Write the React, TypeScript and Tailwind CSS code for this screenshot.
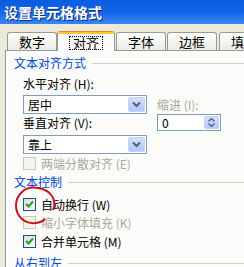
import React from "react";

const font = { fontFamily: '"Noto Sans CJK SC", "Noto Sans", sans-serif' };

function DropBtn() {
  return (
    <div className="w-[17px] h-full rounded-[2px] border border-[#c3d3fd] bg-gradient-to-b from-[#d4e0fc] to-[#b3c7f6] flex items-center justify-center">
      <svg width="9" height="7" viewBox="0 0 9 7">
        <path d="M1 1.5 L4.5 5 L8 1.5" fill="none" stroke="#4d6185" strokeWidth="2" />
      </svg>
    </div>
  );
}

function Select({ value }: { value: string }) {
  return (
    <div className="w-[124px] h-[19px] border border-[#7f9db9] bg-white flex items-center p-[1px]">
      <span className="flex-1 pl-[3px] text-[12px] leading-[14px] text-black">{value}</span>
      <DropBtn />
    </div>
  );
}

function Check({ checked, disabled, label }: { checked?: boolean; disabled?: boolean; label: string }) {
  return (
    <div className="flex items-center h-[13px]">
      <div
        className={
          "w-[13px] h-[13px] border flex items-center justify-center " +
          (disabled
            ? "border-[#cac8bb] bg-[#f5f4ea]"
            : "border-[#1c5180] bg-gradient-to-br from-[#dcdcd7] to-white")
        }
      >
        {checked && (
          <svg width="9" height="9" viewBox="0 0 9 9">
            <path d="M1 4 L3.5 6.5 L8 1.5" fill="none" stroke="#21a121" strokeWidth="2" />
          </svg>
        )}
      </div>
      <span className={"ml-[5px] text-[12px] leading-[14px] " + (disabled ? "text-[#aca899]" : "text-black")}>
        {label}
      </span>
    </div>
  );
}

function Heading({ text }: { text: string }) {
  return (
    <div className="flex items-center h-[14px] pl-[8px]">
      <span className="text-[12px] leading-[14px] text-[#0046d5]">{text}</span>
      <div className="flex-1 ml-[6px] h-[1px] bg-[#d0d0bf]" />
    </div>
  );
}

function Tab({ label }: { label: string }) {
  return (
    <div className="w-[50px] h-[18px] border border-b-0 border-[#919b9c] rounded-t-[3px] bg-gradient-to-b from-white to-[#ecebe5] flex items-center justify-center text-[13px] leading-[14px] text-black shrink-0">
      {label}
    </div>
  );
}

export default function App() {
  return (
    <div className="w-[244px] h-[267px] overflow-hidden bg-[#ece9d8] relative" style={font}>
      <div className="h-[24px] bg-gradient-to-b from-[#0a5ce0] via-[#1464e6] to-[#3a86f2] flex items-center pl-[4px]">
        <span className="text-white font-bold text-[14px] leading-[16px] [text-shadow:1px_1px_0_#0a2a80]">
          设置单元格格式
        </span>
      </div>
      <div className="flex items-end h-[26px] pl-[7px]">
        <Tab label="数字" />
        <div className="relative z-10 -mb-[1px] w-[58px] h-[20px] border-x border-[#919b9c] rounded-t-[3px] bg-[#fcfcfe] flex flex-col shrink-0 overflow-hidden">
          <div className="h-[1px] bg-[#e68b2c]" />
          <div className="h-[2px] bg-[#ffc83c]" />
          <div className="flex-1 flex items-center justify-center">
            <span className="border border-dotted border-black px-[3px] text-[13px] leading-[12px] text-black">对齐</span>
          </div>
        </div>
        <div className="ml-[1px]"><Tab label="字体" /></div>
        <div className="ml-[1px]"><Tab label="边框" /></div>
        <div className="ml-[2px]"><Tab label="填充" /></div>
      </div>
      <div className="ml-[5px] h-[300px] border-l border-t border-[#919b9c] bg-[#fbfbf9]">
        <div className="mt-[5px]"><Heading text="文本对齐方式" /></div>
        <div className="pl-[17px]">
          <div className="mt-[7px] h-[14px] text-[12px] leading-[14px] text-black">水平对齐 (H):</div>
          <div className="mt-[4px] flex items-center">
            <Select value="居中" />
            <span className="ml-[10px] text-[12px] leading-[14px] text-[#aca899]">缩进 (I):</span>
          </div>
          <div className="flex items-center h-[17px]">
            <span className="w-[134px] text-[12px] leading-[14px] text-black">垂直对齐 (V):</span>
            <div className="w-[64px] h-[17px] border border-[#7f9db9] bg-white flex items-center p-[1px]">
              <span className="flex-1 pl-[3px] text-[12px] leading-[14px] text-black">0</span>
              <div className="w-[15px] h-full rounded-[2px] border border-[#c3d3fd] bg-gradient-to-b from-[#d4e0fc] to-[#b3c7f6] flex flex-col items-center justify-center gap-[1px]">
                <svg width="7" height="4" viewBox="0 0 7 4"><path d="M0.5 3.5 L3.5 0.5 L6.5 3.5" fill="none" stroke="#4d6185" strokeWidth="1.4" /></svg>
                <svg width="7" height="4" viewBox="0 0 7 4"><path d="M0.5 0.5 L3.5 3.5 L6.5 0.5" fill="none" stroke="#4d6185" strokeWidth="1.4" /></svg>
              </div>
            </div>
          </div>
          <div className="mt-[4px]"><Select value="靠上" /></div>
          <div className="mt-[3px]"><Check disabled label="两端分散对齐 (E)" /></div>
        </div>
        <div className="mt-[5px]"><Heading text="文本控制" /></div>
        <div className="pl-[17px]">
          <div className="mt-[9px]"><Check checked label="自动换行 (W)" /></div>
          <div className="mt-[5px]"><Check disabled label="缩小字体填充 (K)" /></div>
          <div className="mt-[6px]"><Check checked label="合并单元格 (M)" /></div>
        </div>
        <div className="mt-[8px]"><Heading text="从右到左" /></div>
      </div>
      <svg className="absolute left-0 top-0 pointer-events-none" width="244" height="267">
        <path
          d="M52 196 C 47 188, 30 184, 22 192 C 14 199, 14 212, 22 219 C 29 225, 40 224, 45 219"
          fill="none"
          stroke="#c8141e"
          strokeWidth="2"
        />
        <path d="M52 196 C 55 201, 55 206, 53 210" fill="none" stroke="#c8141e" strokeWidth="2" />
      </svg>
    </div>
  );
}
